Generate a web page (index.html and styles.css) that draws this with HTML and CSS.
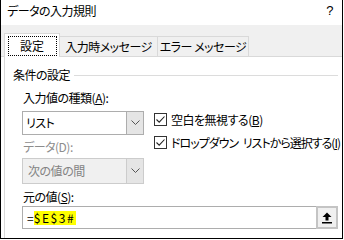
FILE: index.html
```html
<!DOCTYPE html>
<html lang="ja">
<head>
<meta charset="utf-8">
<link rel="stylesheet" href="styles.css">
</head>
<body>
<div class="dialog">
  <div class="titlebar">
    <span class="title">データの入力規則</span>
    <span class="help">?</span>
  </div>
  <div class="tabstrip">
    <div class="tab active"><span class="focus">設定</span></div>
    <div class="tab t2">入力時メッセージ</div>
    <div class="tab t3">エラー メッセージ</div>
  </div>
  <div class="panel">
    <div class="group-head">
      <span class="group-title">条件の設定</span>
      <span class="group-line"></span>
    </div>
    <div class="fields">
      <div class="left-col">
        <div class="lbl">入力値の種類(<u>A</u>):</div>
        <div class="combo">
          <span class="combo-text">リスト</span>
          <span class="combo-btn"><svg width="9" height="6" viewBox="0 0 9 6"><path d="M0.5 0.5 L4.5 4.5 L8.5 0.5" fill="none" stroke="#555" stroke-width="1"/></svg></span>
        </div>
        <div class="lbl disabled lbl-data">データ(D):</div>
        <div class="combo combo-dis">
          <span class="combo-text">次の値の間</span>
          <span class="combo-btn"><svg width="9" height="6" viewBox="0 0 9 6"><path d="M0.5 0.5 L4.5 4.5 L8.5 0.5" fill="none" stroke="#555" stroke-width="1"/></svg></span>
        </div>
      </div>
      <div class="right-col">
        <div class="check-row">
          <span class="box"><svg width="11" height="11" viewBox="0 0 11 11"><path d="M1.5 5.5 L4.2 8.2 L9.5 2.5" fill="none" stroke="#222" stroke-width="1.1"/></svg></span>
          <span class="check-lbl">空白を無視する(<u>B</u>)</span>
        </div>
        <div class="check-row row2">
          <span class="box"><svg width="11" height="11" viewBox="0 0 11 11"><path d="M1.5 5.5 L4.2 8.2 L9.5 2.5" fill="none" stroke="#222" stroke-width="1.1"/></svg></span>
          <span class="check-lbl tight">ドロップダウン <span class="word2">リストから選択する(<u>I</u>)</span></span>
        </div>
      </div>
    </div>
    <div class="lbl lbl-src">元の値(<u>S</u>):</div>
    <div class="refedit">
      <span class="ref-text"><span class="eq">=</span><span class="hl">$E$3#</span></span>
      <span class="ref-btn"><svg width="10" height="12" viewBox="0 0 10 12"><path d="M5 0.5 L9.5 5 L6.5 5 L6.5 8.5 L3.5 8.5 L3.5 5 L0.5 5 Z" fill="#000"/><rect x="0" y="10" width="10" height="1.5" fill="#000"/></svg></span>
    </div>
  </div>
</div>
</body>
</html>
```
FILE: styles.css
```css
* { box-sizing: border-box; }
html, body { margin: 0; padding: 0; background: #fff; }
body {
  font-family: "Noto Sans CJK JP", "Noto Sans", sans-serif;
  font-size: 12px;
  line-height: 14px;
  letter-spacing: -0.5px;
  color: #000;
  font-feature-settings: "palt";
}
u { text-decoration: underline; text-underline-offset: 1px; }
.dialog {
  width: 343px;
  height: 239px;
  border: 1px solid #000;
  border-top: none;
  display: flex;
  flex-direction: column;
  background: #fff;
}
.titlebar {
  height: 25px;
  display: flex;
  align-items: center;
  justify-content: space-between;
  padding: 0 9px 4px 6px;
}
.help { font-family: "Liberation Sans", sans-serif; font-size: 13px; }
.tabstrip {
  height: 32px;
  background: #f0f0f0;
  border-bottom: 1px solid #d9d9d9;
  display: flex;
  align-items: flex-end;
  padding-left: 3px;
}
.tab {
  height: 20px;
  border: 1px solid #d9d9d9;
  border-bottom: none;
  background: #f0f0f0;
  display: flex;
  align-items: center;
  justify-content: center;
  white-space: nowrap;
}
.tab.active {
  width: 56px;
  height: 24px;
  background: #fff;
  margin-bottom: -1px;
  position: relative;
}
.focus {
  width: 47px;
  height: 18px;
  outline: 1px dotted #000;
  display: flex;
  align-items: center;
  justify-content: center;
  margin-top: 1px;
  letter-spacing: 0;
}
.t2 { width: 98px; border-left: none; }
.t3 { width: 91px; border-left: none; }
.panel {
  flex: 1;
  margin-left: 3px;
  border-left: 1px solid #d9d9d9;
  display: flex;
  flex-direction: column;
  padding-left: 17px;
}
.group-head {
  margin-top: 11px;
  margin-left: -9px;
  display: flex;
  align-items: center;
  height: 14px;
}
.group-title { padding-right: 4px; }
.group-line {
  flex: 1;
  height: 1px;
  background: #dcdcdc;
  margin-right: 4px;
}
.fields { display: flex; margin-top: 9px; }
.left-col { width: 122px; flex: none; display: flex; flex-direction: column; }
.lbl { height: 14px; padding-left: 1px; }
.combo {
  margin-top: 6px;
  height: 24px;
  border: 1px solid #adadad;
  display: flex;
  background: #fff;
}
.combo-text { flex: 1; padding-left: 3px; display: flex; align-items: center; }
.combo-btn {
  width: 17px;
  background: #e5e5e5;
  border-left: 1px solid #adadad;
  display: flex;
  align-items: center;
  justify-content: center;
}
.lbl-data { margin-top: 5px; }
.disabled { color: #8d8d8d; }
.combo-dis {
  margin-top: 4px;
  height: 26px;
  background: #f0f0f0;
  border-color: #cccccc;
  color: #838383;
}
.combo-dis .combo-text { padding-left: 5px; }
.combo-dis .combo-btn { border-left-color: #cccccc; }
.right-col {
  margin-left: 10px;
  margin-top: 22px;
  display: flex;
  flex-direction: column;
}
.check-row { display: flex; align-items: center; height: 13px; }
.row2 { margin-top: 10px; }
.box {
  flex: none;
  width: 13px;
  height: 13px;
  border: 1px solid #333;
  background: #fff;
  display: flex;
  align-items: center;
  justify-content: center;
}
.check-lbl { margin-left: 4px; white-space: nowrap; }
.tight { letter-spacing: -1px; }
.word2 { margin-left: 3px; }
.lbl-src { margin-top: 6px; }
.refedit {
  margin-top: 2px;
  width: 316px;
  height: 23px;
  border: 1px solid #adadad;
  display: flex;
}
.ref-text { flex: 1; padding-left: 4px; display: flex; align-items: center; }
.eq { letter-spacing: 0; margin-right: 0; }
.hl { background: #ffff00; letter-spacing: 1.6px; padding-right: 1px; }
.ref-btn {
  width: 22px;
  margin: -1px -1px -1px 0;
  background: #f0f0f0;
  border: 2px solid #c4c4c4;
  display: flex;
  align-items: center;
  justify-content: center;
}
```
